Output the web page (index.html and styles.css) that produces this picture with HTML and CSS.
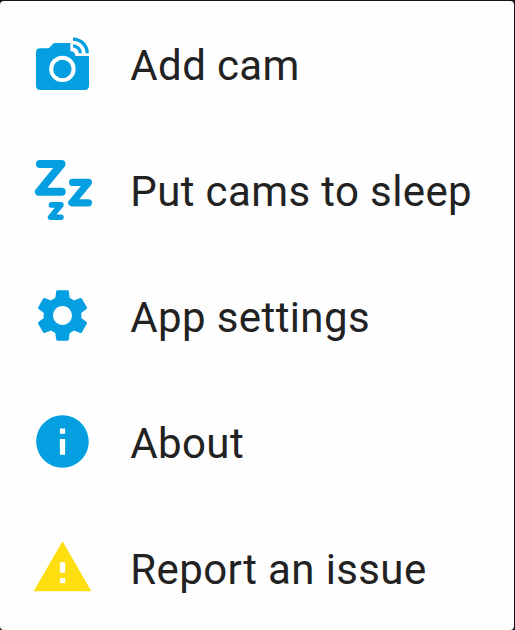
FILE: index.html
```html
<!DOCTYPE html>
<html lang="en">
<head>
<meta charset="utf-8">
<title>Menu</title>
<link rel="stylesheet" href="styles.css">
</head>
<body>
<ul class="menu">
  <li class="item">
    <svg class="icon" viewBox="0 0 63 63">
      <path fill-rule="evenodd" d="M9 16.2H16.5Q18.2 16.2 19.3 14.7L21.7 11.9Q22.6 10.9 24.3 10.9H39.3V19.3H41.2Q44.3 20.5 44.3 23.9H58V53.7Q58 57.9 53.8 57.9H9.2Q5 57.9 5 53.7V20.4Q5 16.2 9 16.2ZM31.4 23.7A13.2 13.2 0 1 0 31.4 50.1A13.2 13.2 0 1 0 31.4 23.7Z"/>
      <circle cx="31.4" cy="36.9" r="9.2"/>
      <path d="M42 5.4A15.9 15.9 0 0 1 57.9 21.3H54.5A12.5 12.5 0 0 0 42 8.8ZM42 12.3A9 9 0 0 1 51 21.3H47.8A5.8 5.8 0 0 0 42 15.5Z"/>
    </svg>
    <span class="label">Add cam</span>
  </li>
  <li class="item">
    <svg class="icon icon-sleep" viewBox="0 0 63 63">
      <path stroke-width="8" d="M9 6.1H30.5L7.9 33.8H30.7"/>
      <path stroke-width="7.2" d="M41.6 24.4H57.4L40.8 44.8H57.4"/>
      <path stroke-width="5.6" d="M20.5 46.9H29.9L19.6 59.3H29.9"/>
    </svg>
    <span class="label">Put cams to sleep</span>
  </li>
  <li class="item">
    <svg class="icon" viewBox="0 0 24 24">
      <path d="M19.14 12.94c.04-.3.06-.61.06-.94 0-.32-.02-.64-.07-.94l2.03-1.58c.18-.14.23-.41.12-.61l-1.92-3.32c-.12-.22-.37-.29-.59-.22l-2.39.96c-.5-.38-1.03-.7-1.62-.94l-.36-2.54c-.04-.24-.24-.41-.48-.41h-3.84c-.24 0-.43.17-.47.41l-.36 2.54c-.59.24-1.13.57-1.62.94l-2.39-.96c-.22-.08-.47 0-.59.22L2.74 8.87c-.12.21-.08.47.12.61l2.03 1.58c-.05.3-.09.63-.09.94s.02.64.07.94l-2.03 1.58c-.18.14-.23.41-.12.61l1.92 3.32c.12.22.37.29.59.22l2.39-.96c.5.38 1.03.7 1.62.94l.36 2.54c.05.24.24.41.48.41h3.84c.24 0 .44-.17.47-.41l.36-2.54c.59-.24 1.13-.56 1.62-.94l2.39.96c.22.08.47 0 .59-.22l1.92-3.32c.12-.22.07-.47-.12-.61l-2.01-1.58zM12 15.6c-1.98 0-3.6-1.62-3.6-3.6s1.62-3.6 3.6-3.6 3.6 1.62 3.6 3.6-1.62 3.6-3.6 3.6z"/>
    </svg>
    <span class="label">App settings</span>
  </li>
  <li class="item">
    <svg class="icon" viewBox="0 0 24 24">
      <path d="M12 2C6.48 2 2 6.48 2 12s4.48 10 10 10 10-4.48 10-10S17.52 2 12 2zm1 15h-2v-6h2v6zm0-8h-2V7h2v2z"/>
    </svg>
    <span class="label">About</span>
  </li>
  <li class="item">
    <svg class="icon icon-warning" viewBox="0 0 24 24">
      <path d="M1 21h22L12 2 1 21zm12-3h-2v-2h2v2zm0-4h-2v-4h2v4z"/>
    </svg>
    <span class="label">Report an issue</span>
  </li>
</ul>
</body>
</html>
```
FILE: styles.css
```css
body {
  margin: 0;
  height: 630px;
  box-sizing: border-box;
  padding: 1px 1px 0 0;
  background: #161314;
  overflow: hidden;
}

.menu {
  height: 629px;
  box-sizing: border-box;
  margin: 0;
  padding: 0;
  list-style: none;
  background: #fefefe;
  border-radius: 4px;
}

.item {
  display: flex;
  align-items: center;
  height: 126px;
  padding-left: 31px;
  gap: 36.3px;
}

.item:first-child {
  height: 125px;
}

.icon {
  flex: none;
  width: 63px;
  height: 63px;
  fill: #039fe1;
}

.icon-sleep path {
  fill: none;
  stroke: #039fe1;
  stroke-linecap: round;
  stroke-linejoin: round;
}

.icon-warning {
  fill: #ffde10;
}

.label {
  font: 400 42px/50px Roboto, sans-serif;
  letter-spacing: 0.38px;
  color: #222;
  white-space: nowrap;
  padding-top: 5px;
}
```
